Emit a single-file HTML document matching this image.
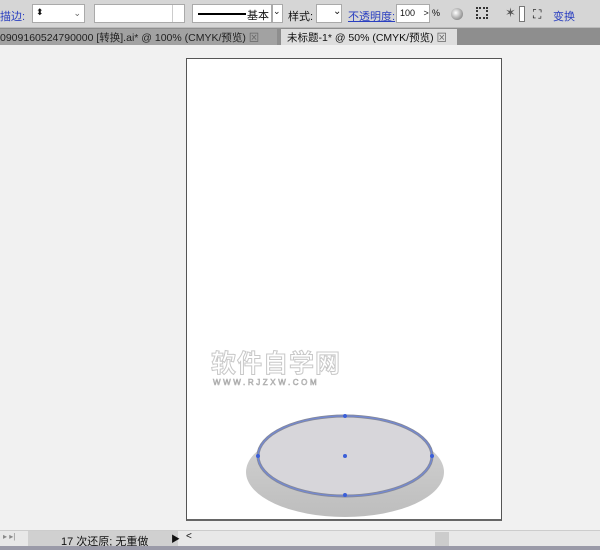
<!DOCTYPE html>
<html><head><meta charset="utf-8"><style>
*{margin:0;padding:0;box-sizing:border-box}
body{width:600px;height:550px;overflow:hidden;background:#f1f1f1;font-family:"Liberation Sans","Noto Sans CJK SC",sans-serif;font-size:11px;position:relative;color:#111}
.a{position:absolute}
.tb{left:0;top:0;width:600px;height:28px;background:#d6d6d6;border-bottom:1px solid #bbb}
.box{background:#fff;border:1px solid #aaa;height:19px;top:4px}
.tabs{left:0;top:28px;width:600px;height:17px;background:#8e8e8e}
.blue{color:#2a3fc0;text-decoration:underline}
</style></head><body>
<div class="a tb"></div>
<div class="a blue" style="left:0;top:8px;text-decoration:none">描边:</div>
<div class="a box" style="left:32px;width:53px"><span style="position:absolute;left:3px;top:2px;font-size:9px">⬍</span><span style="position:absolute;right:3px;top:3px;font-size:9px;color:#666">⌄</span></div>
<div class="a box" style="left:94px;width:91px"><span style="position:absolute;right:0;top:0;width:12px;height:17px;border-left:1px solid #ccc"></span></div>
<div class="a box" style="left:192px;width:80px"><span style="position:absolute;left:5px;top:8px;width:48px;height:2px;background:#000"></span><span style="position:absolute;left:54px;top:2px">基本</span></div>
<div class="a box" style="left:272px;width:11px"><span style="font-size:9px">⌄</span></div>
<div class="a" style="left:288px;top:8px">样式:</div>
<div class="a box" style="left:316px;width:26px"></div>
<div class="a" style="left:333px;top:6px;font-size:10px">⌄</div>
<div class="a blue" style="left:348px;top:8px">不透明度:</div>
<div class="a box" style="left:396px;width:34px;font-size:9px;padding:3px 0 0 3px">100 <span style="margin-left:6px">&gt;</span></div>
<div class="a" style="left:432px;top:8px;font-size:9px">%</div>
<div class="a" style="left:451px;top:8px;width:12px;height:12px;border-radius:50%;background:radial-gradient(circle at 40% 40%,#fff,#666)"></div>
<div class="a" style="left:476px;top:7px;width:12px;height:12px;border:2px dotted #333"></div>
<div class="a" style="left:505px;top:5px;font-size:13px;color:#555">✶</div>
<div class="a" style="left:519px;top:6px;width:6px;height:16px;background:#fff;border:1px solid #777"></div>
<div class="a" style="left:533px;top:7px;font-size:12px">⛶</div>
<div class="a blue" style="left:553px;top:8px;text-decoration:none">变换</div>
<div class="a tabs"></div>
<div class="a" style="left:0;top:29px;width:277px;height:16px;background:#a2a2a2;color:#222;padding:1px 0 0 0;font-size:10.5px;white-space:nowrap">0909160524790000 [转换].ai* @ 100% (CMYK/预览) <span style="color:#666">⊠</span></div>
<div class="a" style="left:281px;top:29px;width:176px;height:16px;background:#dedede;padding:1px 0 0 6px;font-size:10.5px;white-space:nowrap">未标题-1* @ 50% (CMYK/预览) <span style="color:#666">⊠</span></div>
<div class="a" style="left:186px;top:58px;width:316px;height:463px;background:#fff;border:1px solid #555;border-bottom:2px solid #666"></div>
<div class="a" style="left:211px;top:350px;font-size:25px;line-height:28px;font-weight:bold;color:#fff;letter-spacing:1px;-webkit-text-stroke:1px #c8c8c8">软件自学网</div>
<div class="a" style="left:213px;top:378px;font-size:8px;line-height:9px;color:#fff;letter-spacing:2.6px;-webkit-text-stroke:.6px #aaa">WWW.RJZXW.COM</div>
<svg class="a" style="left:0;top:0" width="600" height="550">
<defs><linearGradient id="g" x1="0" y1="0" x2="0" y2="1"><stop offset="0" stop-color="#d4d4d4"/><stop offset="1" stop-color="#bdbdbd"/></linearGradient></defs>
<ellipse cx="345" cy="472" rx="99" ry="45" fill="url(#g)"/>
<ellipse cx="345" cy="456" rx="87" ry="40" fill="#d7d6da" stroke="#858a9e" stroke-width="3"/>
<ellipse cx="345" cy="456" rx="87" ry="40" fill="none" stroke="#6f88dc" stroke-width="1"/>
<g fill="#3b5fd8"><circle cx="345" cy="416" r="2"/><circle cx="345" cy="495" r="2"/><circle cx="258" cy="456" r="2"/><circle cx="432" cy="456" r="2"/><circle cx="345" cy="456" r="2"/></g>
</svg>
<div class="a" style="left:0;top:530px;width:600px;height:20px;background:#e8e8e8;border-top:1px solid #ccc"></div>
<div class="a" style="left:3px;top:532px;font-size:8px;color:#888">▸ ▸|</div>
<div class="a" style="left:28px;top:531px;width:150px;height:16px;background:#d0d0d0;padding:2px 0 0 33px">17 次还原; 无重做</div>
<div class="a" style="left:171px;top:532px;font-size:9px">▶</div>
<div class="a" style="left:186px;top:531px;font-size:10px">&lt;</div>
<div class="a" style="left:435px;top:532px;width:14px;height:14px;background:#ccc"></div>
<div class="a" style="left:0;top:546px;width:600px;height:4px;background:#9a9aa8"></div>
</body></html>
